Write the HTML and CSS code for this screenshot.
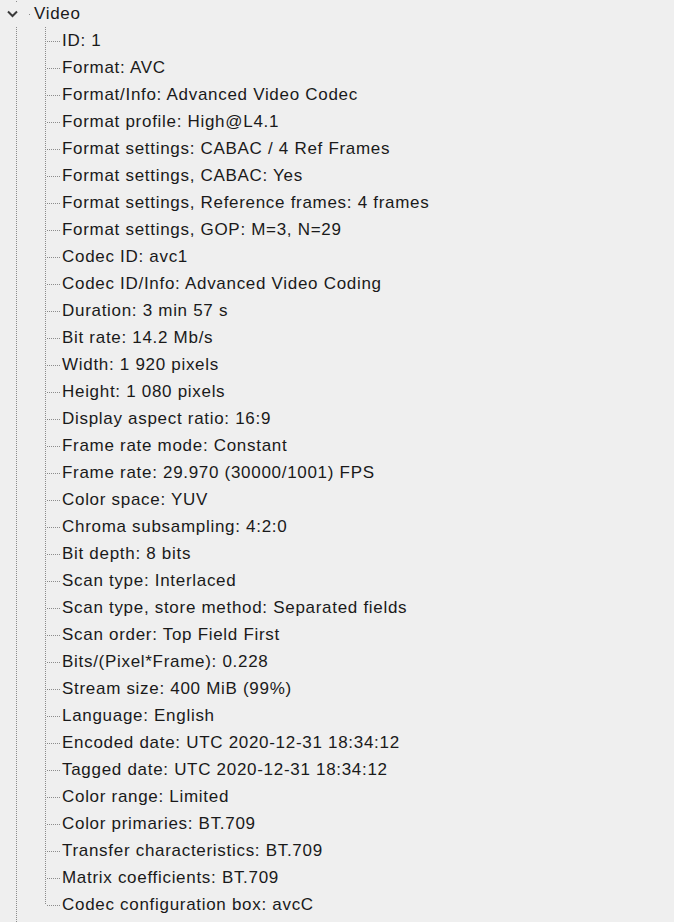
FILE: index.html
```html
<!DOCTYPE html>
<html>
<head>
<meta charset="utf-8">
<link rel="stylesheet" href="styles.css">
</head>
<body>
<div class="tree">
  <div class="root-row">
    <span class="toggle"><svg width="11" height="8" viewBox="0 0 11 8"><path d="M1 1.5 L5.5 6 L10 1.5" fill="none" stroke="#3a3a3a" stroke-width="2"/></svg></span>
    <span class="root-dot"></span>
    <span class="label">Video</span>
  </div>
  <ul class="children">
    <li><span class="conn"></span><span class="label">ID: 1</span></li>
    <li><span class="conn"></span><span class="label">Format: AVC</span></li>
    <li><span class="conn"></span><span class="label">Format/Info: Advanced Video Codec</span></li>
    <li><span class="conn"></span><span class="label">Format profile: High@L4.1</span></li>
    <li><span class="conn"></span><span class="label">Format settings: CABAC / 4 Ref Frames</span></li>
    <li><span class="conn"></span><span class="label">Format settings, CABAC: Yes</span></li>
    <li><span class="conn"></span><span class="label">Format settings, Reference frames: 4 frames</span></li>
    <li><span class="conn"></span><span class="label">Format settings, GOP: M=3, N=29</span></li>
    <li><span class="conn"></span><span class="label">Codec ID: avc1</span></li>
    <li><span class="conn"></span><span class="label">Codec ID/Info: Advanced Video Coding</span></li>
    <li><span class="conn"></span><span class="label">Duration: 3 min 57 s</span></li>
    <li><span class="conn"></span><span class="label">Bit rate: 14.2 Mb/s</span></li>
    <li><span class="conn"></span><span class="label">Width: 1 920 pixels</span></li>
    <li><span class="conn"></span><span class="label">Height: 1 080 pixels</span></li>
    <li><span class="conn"></span><span class="label">Display aspect ratio: 16:9</span></li>
    <li><span class="conn"></span><span class="label">Frame rate mode: Constant</span></li>
    <li><span class="conn"></span><span class="label">Frame rate: 29.970 (30000/1001) FPS</span></li>
    <li><span class="conn"></span><span class="label">Color space: YUV</span></li>
    <li><span class="conn"></span><span class="label">Chroma subsampling: 4:2:0</span></li>
    <li><span class="conn"></span><span class="label">Bit depth: 8 bits</span></li>
    <li><span class="conn"></span><span class="label">Scan type: Interlaced</span></li>
    <li><span class="conn"></span><span class="label">Scan type, store method: Separated fields</span></li>
    <li><span class="conn"></span><span class="label">Scan order: Top Field First</span></li>
    <li><span class="conn"></span><span class="label">Bits/(Pixel*Frame): 0.228</span></li>
    <li><span class="conn"></span><span class="label">Stream size: 400 MiB (99%)</span></li>
    <li><span class="conn"></span><span class="label">Language: English</span></li>
    <li><span class="conn"></span><span class="label">Encoded date: UTC 2020-12-31 18:34:12</span></li>
    <li><span class="conn"></span><span class="label">Tagged date: UTC 2020-12-31 18:34:12</span></li>
    <li><span class="conn"></span><span class="label">Color range: Limited</span></li>
    <li><span class="conn"></span><span class="label">Color primaries: BT.709</span></li>
    <li><span class="conn"></span><span class="label">Transfer characteristics: BT.709</span></li>
    <li><span class="conn"></span><span class="label">Matrix coefficients: BT.709</span></li>
    <li><span class="conn"></span><span class="label">Codec configuration box: avcC</span></li>
  </ul>
</div>
</body>
</html>
```
FILE: styles.css
```css
html, body {
  margin: 0;
  padding: 0;
  background: #efefef;
  height: 100%;
}

body {
  font-family: "Liberation Sans", Arial, sans-serif;
  font-size: 17px;
  letter-spacing: 0.7px;
  color: #1a1a1a;
}

.tree {
  min-height: 922px;
  box-sizing: border-box;
  background:
    repeating-linear-gradient(to bottom, #8c8c8c 0 1px, transparent 1px 2px) 16px 27px / 1px calc(100% - 27px) no-repeat,
    linear-gradient(#8c8c8c, #8c8c8c) 16px 1px / 1px 1px no-repeat;
}

.root-row {
  height: 27px;
  display: flex;
  align-items: center;
}

.toggle {
  width: 11px;
  height: 8px;
  margin-left: 7px;
  display: flex;
}

.root-dot {
  width: 1px;
  height: 1px;
  background: #8c8c8c;
  margin-left: 11px;
  margin-top: 1px;
}

.root-row .label {
  margin-left: 4px;
}

.children {
  list-style: none;
  margin: 0 0 0 45px;
  padding: 0;
  background: repeating-linear-gradient(to bottom, #8c8c8c 0 1px, transparent 1px 2px) 0 0 / 1px calc(100% - 13px) no-repeat;
}

.children li {
  height: 27px;
  display: flex;
  align-items: center;
}

.conn {
  width: 14px;
  height: 1px;
  margin-left: 2px;
  margin-top: 2px;
  background: repeating-linear-gradient(to right, #8c8c8c 0 1px, transparent 1px 2px);
}

.children .label {
  margin-left: 1px;
  white-space: nowrap;
}
```
